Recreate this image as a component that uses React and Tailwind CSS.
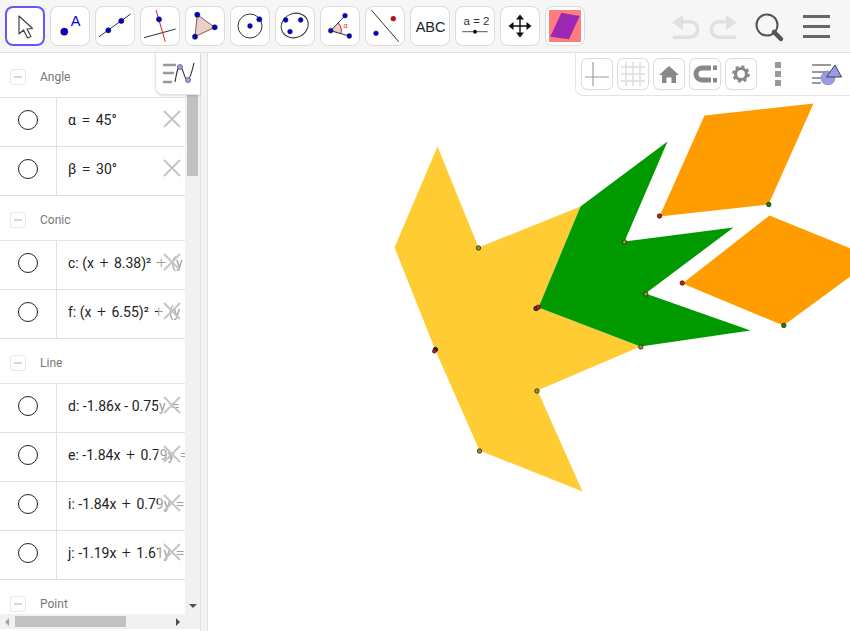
const SANS = "font-['Liberation_Sans',Arial,sans-serif]";

const Dot = ({ x, y, r = 2.6, fill = '#0000d8' }) => <circle cx={x} cy={y} r={r} fill={fill} stroke="#222" strokeWidth="0.5" />;

const TOOL_ICONS = [
  <path key="m" d="M14 10 L14 28 L18.5 24 L22.5 32 L26 30.5 L22 23 L27.5 22.5 Z" fill="#fff" stroke="#444" strokeWidth="1.2" strokeLinejoin="round" />,
  <g key="p">
    <circle cx="14.3" cy="25.7" r="3.6" fill="#0000d8" stroke="#111" strokeWidth="0.5" />
    <text x="20.7" y="20" fontSize="14.5" fill="#0000e0" fontFamily="Liberation Sans">A</text>
  </g>,
  <g key="l">
    <line x1="4" y1="30.7" x2="35.7" y2="8" stroke="#333" strokeWidth="1" />
    <Dot x={13.3} y={24.3} /><Dot x={26.3} y={14.9} />
  </g>,
  <g key="perp">
    <line x1="4" y1="31.7" x2="35.7" y2="23" stroke="#333" strokeWidth="1" />
    <line x1="16" y1="4" x2="25.3" y2="35.7" stroke="#e0202a" strokeWidth="1" />
    <Dot x={19} y={13.3} />
  </g>,
  <g key="tri">
    <path d="M12.3 8.7 L29.7 21.3 L10 30.7 Z" fill="#eccfc8" stroke="#8c5a48" strokeWidth="1" />
    <Dot x={12.3} y={8.7} /><Dot x={29.7} y={21.3} /><Dot x={10} y={30.7} />
  </g>,
  <g key="c">
    <circle cx="20" cy="20" r="12" fill="none" stroke="#333" strokeWidth="1" />
    <Dot x={20} y={20} r={2.4} /><Dot x={29.3} y={13.3} />
  </g>,
  <g key="e">
    <ellipse cx="19.7" cy="19.5" rx="13.8" ry="12" transform="rotate(-25 19.7 19.5)" fill="none" stroke="#333" strokeWidth="1" />
    <Dot x={10.7} y={14} r={2.4} /><Dot x={25.7} y={14} r={2.4} /><Dot x={15} y={25.7} r={2.4} />
  </g>,
  <g key="a">
    <path d="M10.7 24.7 L18 17 A11 11 0 0 1 21 27.5 Z" fill="#eccfc8" />
    <path d="M18 17 A11 11 0 0 1 21 27.5" fill="none" stroke="#c0201c" strokeWidth="1" />
    <line x1="10.7" y1="24.7" x2="25" y2="9.7" stroke="#333" strokeWidth="1" />
    <line x1="10.7" y1="24.7" x2="29.3" y2="30" stroke="#333" strokeWidth="1" />
    <Dot x={10.7} y={24.7} r={2.4} /><Dot x={25} y={9.7} r={2.4} /><Dot x={29.3} y={30} r={2.4} />
    <text x="23.5" y="22" fontSize="7" fill="#e02020" fontFamily="Liberation Sans">α</text>
  </g>,
  <g key="r">
    <line x1="6.3" y1="4" x2="33.7" y2="35.7" stroke="#333" strokeWidth="1" />
    <Dot x={28.3} y={12.7} r={2.4} fill="#e00000" /><Dot x={11} y={27.3} r={2.4} />
  </g>,
  <text key="t" x="5.7" y="25.5" fontSize="14.5" fill="#222" fontFamily="Liberation Sans">ABC</text>,
  <g key="s">
    <text x="8.6" y="19" fontSize="11.5" fill="#333" fontFamily="Liberation Sans">a = 2</text>
    <line x1="7.3" y1="25.7" x2="32.7" y2="25.7" stroke="#555" strokeWidth="1" />
    <circle cx="20" cy="25.7" r="2" fill="#111" />
  </g>,
  <path key="mv" d="M20 8.5 L24 13.5 L20.7 13.5 L20.7 19.3 L26.5 19.3 L26.5 16 L31.5 20 L26.5 24 L26.5 20.7 L20.7 20.7 L20.7 26.5 L24 26.5 L20 31.5 L16 26.5 L19.3 26.5 L19.3 20.7 L13.5 20.7 L13.5 24 L8.5 20 L13.5 16 L13.5 19.3 L19.3 19.3 L19.3 13.5 L16 13.5 Z" fill="#111" />,
];

const ToolButton = ({ active, children }) => (
  <div className={active
    ? 'w-10 h-10 shrink-0 rounded-lg bg-white ring-2 ring-inset ring-[#6557ff]'
    : 'w-10 h-10 shrink-0 rounded-lg bg-white ring-1 ring-inset ring-[#dcdcdc]'}>
    <svg viewBox="0 0 40 40" className="w-10 h-10">{children}</svg>
  </div>
);

const StyleButton = ({ children }) => (
  <div className="w-8 h-8 shrink-0 rounded-md ring-1 ring-inset ring-[#dcdcdc] bg-white">
    <svg viewBox="0 0 32 32" className="w-8 h-8">{children}</svg>
  </div>
);

function Header({ label, height, pad = 'pt-[3px]' }) {
  return (
    <div className={`${height} ${pad} flex items-center border-b border-[#e4e4e4] pl-[10px] shrink-0`}>
      <div className="w-4 h-4 rounded-[3px] border border-[#e8e8e8] flex items-center justify-center">
        <div className="w-2 h-[2px] bg-[#d8d8d8]" />
      </div>
      <span className="ml-[14px] text-[12px] text-[#777] font-['Roboto',sans-serif]">{label}</span>
    </div>
  );
}

// + and = sit wider in the formula editor than in plain text
function Formula({ text }) {
  return text.split(/([+=])/).map((part, i) => (
    part === '+' || part === '='
      ? <span key={i} className="mx-[2px] text-[16px] font-light leading-none">{part}</span>
      : <span key={i} className="whitespace-pre">{part}</span>
  ));
}

function Row({ text }) {
  return (
    <div className="h-[49px] flex border-b border-[#e0e0e0] shrink-0 relative">
      <div className="w-[57px] shrink-0 pb-1 border-r border-[#e0e0e0] flex items-center justify-center">
        <div className="w-5 h-5 rounded-full border border-[#222]" />
      </div>
      <div className="pl-[11px] pb-1 flex items-center whitespace-nowrap text-[14px] text-[#222] font-['Roboto',sans-serif]">
        <Formula text={text} />
      </div>
      <div className="absolute left-[158px] top-[10px] w-[27px] h-[22px] bg-white/55">
        <svg viewBox="0 0 18 18" className="ml-[5px] mt-[2px] w-[18px] h-[18px]">
          <path d="M1 1 L17 17 M17 1 L1 17" stroke="#c4c4c4" strokeWidth="1.9" />
        </svg>
      </div>
    </div>
  );
}

function AlgebraView() {
  return (
    <div className="w-[200px] shrink-0 flex flex-col bg-white h-[576px] self-start">
      <div className="flex flex-1 min-h-0">
        <div className="w-[185px] overflow-hidden flex flex-col">
          <Header label="Angle" height="h-[45px]" pad="pt-[4px]" />
          <Row text="α = 45°" />
          <Row text="β = 30°" />
          <Header label="Conic" height="h-[45px]" />
          <Row text="c: (x + 8.38)² + (y" />
          <Row text="f: (x + 6.55)² + (y +" />
          <Header label="Line" height="h-[45px]" />
          <Row text="d: -1.86x - 0.75y =" />
          <Row text="e: -1.84x + 0.79y =" />
          <Row text="i: -1.84x + 0.79y =" />
          <Row text="j: -1.19x + 1.61y =" />
          <Header label="Point" height="h-[45px]" />
        </div>
        <div className="w-[15px] shrink-0 bg-[#f1f1f1] flex flex-col items-center">
          <div className="mt-[40px] w-[11px] h-[83px] bg-[#c1c1c1]" />
          <div className="mt-auto mb-[6px] w-0 h-0 border-x-[4px] border-x-transparent border-t-[4px] border-t-[#505050]" />
        </div>
      </div>
      <div className="h-[15px] shrink-0 bg-[#f1f1f1] flex items-center px-[5px]">
        <div className="w-0 h-0 border-y-[4px] border-y-transparent border-r-[4px] border-r-[#a3a3a3]" />
        <div className="ml-[6px] w-[111px] h-[11px] bg-[#c1c1c1]" />
        <div className="ml-[50px] w-0 h-0 border-y-[4px] border-y-transparent border-l-[4px] border-l-[#505050]" />
      </div>
    </div>
  );
}

const POINTS = [
  [478, 247.5, '#8a9a1c'], [624, 241.5, '#8a9a1c'], [645.3, 293.5, '#8a9a1c'], [640.3, 346.5, '#8a9a1c'],
  [536.5, 390.5, '#8a9a1c'], [479, 450.5, '#8a9a1c'], [659, 215.5, '#e01010'], [681.7, 282.5, '#e01010'],
  [768.3, 204, '#0a8a10'], [783.3, 325, '#0a8a10'],
];

function Drawing() {
  // the svg starts at x=208, y=53
  return (
    <svg viewBox="207.5 52.5 642 578" className="w-[642px] h-[578px] block">
      <polygon points="437,146 478,247 580,206 538,307 640,346 537,390 582,491 479,450 435,350 394,247" fill="#ffcc33" />
      <polygon points="667,141 624,241 733,227 645,293 750,330 640,346 538,307 580,206" fill="#009a00" />
      <polygon points="704,115 813,103 768,204 659,216" fill="#ff9c00" />
      <polygon points="769,215 850,248 850,276 783,325 682,283" fill="#ff9c00" />
      {POINTS.map(([x, y, c]) => (
        <circle key={`${x}-${y}`} cx={x} cy={y} r="2.2" fill={c} stroke="#222" strokeWidth="0.8" />
      ))}
      <circle cx="535.5" cy="308" r="2.2" fill="#444" stroke="#222" />
      <circle cx="537.7" cy="306.7" r="2.2" fill="#e01010" stroke="#222" strokeWidth="0.8" />
      <circle cx="435" cy="349" r="2.2" fill="#222" stroke="#222" />
      <circle cx="433.8" cy="350.8" r="1.9" fill="#e01010" stroke="#222" strokeWidth="0.6" />
    </svg>
  );
}

export default function App() {
  return (
    <div className={`${SANS} w-[850px] h-[631px] overflow-hidden relative bg-white flex flex-col`}>
      {/* Toolbar */}
      <div className="h-[53px] shrink-0 bg-[#f6f6f6] border-b border-[#e2e2e2] flex items-start pt-[6px] pl-[5px]">
        <div className="flex gap-[5px]">
          {TOOL_ICONS.map((icon, i) => <ToolButton key={i} active={i === 0}>{icon}</ToolButton>)}
          <div className="w-10 h-10 shrink-0 rounded-lg bg-white ring-1 ring-inset ring-[#dcdcdc] p-1">
            <svg viewBox="0 0 32 32" className="w-8 h-8">
              <rect width="32" height="32" fill="#ff7d80" />
              <polygon points="12.3,2.7 30.7,6 20,29.3 1.3,26.7" fill="#9c27b0" />
            </svg>
          </div>
        </div>
        <div className="ml-[87px] mt-[9px] flex items-center gap-[9px]">
          <svg viewBox="0 0 28 24" className="w-7 h-6">
            <path d="M0 7.5 L11 0 V5 H18 A9.5 9.5 0 0 1 18 24 H1 V20.5 H18 A6 6 0 0 0 18 8.5 H11 V15 Z" fill="#e0e0e0" />
          </svg>
          <svg viewBox="0 0 28 24" className="w-7 h-6">
            <path d="M28 7.5 L17 0 V5 H10 A9.5 9.5 0 0 0 10 24 H27 V20.5 H10 A6 6 0 0 1 10 8.5 H17 V15 Z" fill="#e0e0e0" />
          </svg>
        </div>
        <svg viewBox="0 0 30 30" className="ml-[18px] mt-[7px] w-[30px] h-[30px]">
          <circle cx="12" cy="12" r="10.5" fill="none" stroke="#555" strokeWidth="2" />
          <line x1="19" y1="19" x2="26" y2="26" stroke="#555" strokeWidth="4.5" strokeLinecap="round" />
        </svg>
        <div className="ml-[18px] mt-[9px] w-[27px] flex flex-col gap-[7px]">
          <div className="h-[3px] bg-[#666]" />
          <div className="h-[3px] bg-[#666]" />
          <div className="h-[3px] bg-[#666]" />
        </div>
      </div>

      <div className="flex flex-1 min-h-0">
        <AlgebraView />
        <div className="w-2 shrink-0 bg-[#f4f4f4] border-x border-[#e2e2e2]" />
        <div className="flex-1 bg-white"><Drawing /></div>
      </div>

      {/* Floating toggle over the algebra view */}
      <div className="absolute left-[155px] top-[53px] w-[45px] h-[42px] bg-white rounded-bl-lg border-l border-b border-[#e4e4e4] shadow-sm">
        <svg viewBox="0 0 45 42" className="w-[45px] h-[42px]">
          <path d="M7 12 H20 M7 20 H18 M7 29 H16" stroke="#999" strokeWidth="2.4" />
          <path d="M19 29 C21 18 22 13 24 13 C27 13 28 27 31.5 27 C34 27 36 18 38 10" fill="none" stroke="#333" strokeWidth="1.1" />
          <circle cx="24" cy="14" r="2.6" fill="#9a9ae8" stroke="#555" strokeWidth="0.6" />
          <circle cx="32" cy="27" r="2.6" fill="#9a9ae8" stroke="#555" strokeWidth="0.6" />
        </svg>
      </div>

      {/* Floating style bar */}
      <div className="absolute left-[575px] top-[53px] w-[275px] h-[43px] bg-white border-l border-b border-[#e4e4e4] rounded-bl-lg flex items-center pl-[5px] gap-1">
        <StyleButton><path d="M12 4 V28 M4 19 H28" stroke="#999" strokeWidth="1.1" /></StyleButton>
        <StyleButton><path d="M9 4 V28 M16 4 V28 M23 4 V28 M4 9 H28 M4 16 H28 M4 23 H28" stroke="#ddd" strokeWidth="1.5" /></StyleButton>
        <StyleButton><path d="M16 8 L26 17 H23 V25 H18.5 V19.5 H13.5 V25 H9 V17 H6 Z" fill="#888" /></StyleButton>
        <StyleButton>
          <path d="M22 10 H13 A6 6 0 0 0 13 22 H22" fill="none" stroke="#888" strokeWidth="5" />
          <path d="M24 7.5 H28 V12 H24 Z M24 20 H28 V24.5 H24 Z" fill="#888" />
        </StyleButton>
        <StyleButton>
          <circle cx="16" cy="16" r="5.5" fill="none" stroke="#888" strokeWidth="3.2" />
          <circle cx="16" cy="16" r="7.6" fill="none" stroke="#888" strokeWidth="2.4" strokeDasharray="3 3" />
        </StyleButton>
        <div className="ml-[14px] flex flex-col gap-[3px] w-[6px]">
          <div className="h-[6px] bg-[#999]" />
          <div className="h-[6px] bg-[#999]" />
          <div className="h-[6px] bg-[#999]" />
        </div>
        <svg viewBox="0 0 30 22" className="ml-[27px] w-[30px] h-[22px]">
          <path d="M0 2 H19 M0 9 H15 M0 15 H9 M0 20 H9" stroke="#999" strokeWidth="1.8" />
          <circle cx="16" cy="15" r="7" fill="#9a9ae8" stroke="#777" strokeWidth="0.5" />
          <path d="M23 2 L29.5 14 H14.5 Z" fill="#9a9ae8" stroke="#444" strokeWidth="1" />
        </svg>
      </div>
    </div>
  );
}
